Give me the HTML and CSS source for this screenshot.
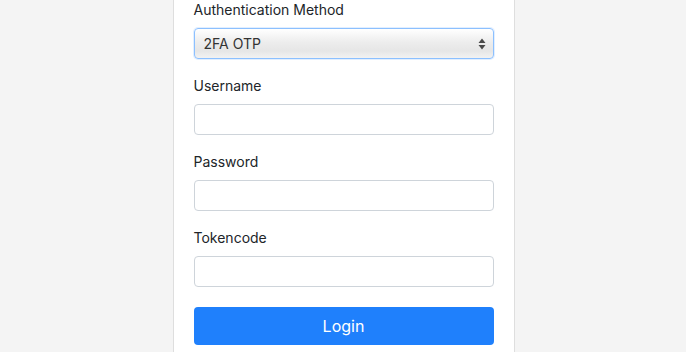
FILE: index.html
```html
<!DOCTYPE html>
<html>
<head>
<meta charset="utf-8">
<link rel="stylesheet" href="styles.css">
</head>
<body>
<div class="page">
  <form class="card">
    <div class="group">
      <label class="label">Authentication Method</label>
      <div class="select">
        <span class="select-value">2FA OTP</span>
        <svg class="select-arrows" width="8" height="12" viewBox="0 0 8 12"><path d="M4 0.5 L7.5 5 H0.5 Z M4 11.5 L7.5 7 H0.5 Z" fill="#4a4a4a"/></svg>
      </div>
    </div>
    <div class="group">
      <label class="label">Username</label>
      <input class="input" type="text">
    </div>
    <div class="group">
      <label class="label">Password</label>
      <input class="input" type="password">
    </div>
    <div class="group">
      <label class="label">Tokencode</label>
      <input class="input" type="text">
    </div>
    <button class="btn" type="button">Login</button>
  </form>
</div>
</body>
</html>
```
FILE: styles.css
```css
html, body {
  margin: 0;
  padding: 0;
  background: #f4f4f4;
  font-family: Inter, "Liberation Sans", sans-serif;
  color: #212529;
}
.page {
  display: flex;
  justify-content: center;
  padding-left: 1px;
}
.card {
  width: 300px;
  background: #fff;
  border-left: 1px solid #dedede;
  border-right: 1px solid #dedede;
  padding: 0 20px 20px 20px;
  margin-top: -1px;
  display: flex;
  flex-direction: column;
}
.group {
  display: flex;
  flex-direction: column;
  margin-bottom: 16px;
}
.label {
  font-size: 14px;
  line-height: 21px;
  margin-bottom: 8px;
}
.select {
  box-sizing: border-box;
  height: 31px;
  border: 1px solid #8cc0ff;
  border-radius: 4px;
  background: linear-gradient(to bottom, #ffffff 0%, #ededed 45%, #e6e6e6 75%, #f2f2f2 100%);
  display: flex;
  align-items: center;
  justify-content: space-between;
  padding: 0 7px 0 9px;
  box-shadow: 0 0 0 1px rgba(140,192,255,0.25);
}
.select-value {
  font-size: 14px;
  color: #333;
}
.input {
  box-sizing: border-box;
  height: 31px;
  border: 1px solid #ced4da;
  border-radius: 4px;
  background: #fff;
  font-size: 14px;
  padding: 0 8px;
  margin: 0;
}
.btn {
  box-sizing: border-box;
  height: 38px;
  border: none;
  border-radius: 4px;
  background: #1f80fc;
  color: #fff;
  font-family: Inter, "Liberation Sans", sans-serif;
  font-size: 16px;
  margin: 0;
  margin-top: 4px;
}
```
